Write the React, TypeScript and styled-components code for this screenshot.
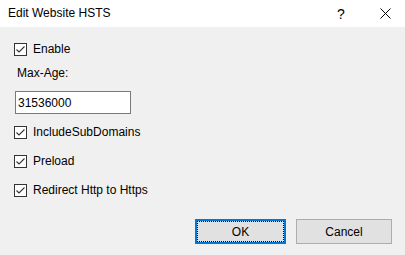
import React from "react";
import styled, { createGlobalStyle } from "styled-components";

const Global = createGlobalStyle`
  html, body { margin: 0; padding: 0; background: #f0f0f0; }
  body { font-family: "Liberation Sans", Arial, sans-serif; font-size: 12px; color: #000; }
`;

const Window = styled.div`
  width: 405px;
  height: 255px;
  display: flex;
  flex-direction: column;
  background: #f0f0f0;
  overflow: hidden;
`;

const TitleBar = styled.div`
  height: 27px;
  flex: none;
  background: #ffffff;
  display: flex;
  align-items: center;
  padding-left: 8px;
  box-sizing: border-box;
`;

const Title = styled.div`
  flex: 1;
  font-size: 12px;
  color: #000;
  padding-bottom: 2px;
`;

const TitleButton = styled.div<{ $w: number }>`
  width: ${(p) => p.$w}px;
  height: 27px;
  display: flex;
  align-items: center;
  justify-content: center;
  font-size: 14px;
  color: #000;
`;

const Content = styled.div`
  flex: 1;
  display: flex;
  flex-direction: column;
  padding: 15px 0 0 14px;
`;

const CheckRow = styled.label<{ $mt: number }>`
  display: flex;
  align-items: center;
  gap: 6px;
  height: 14px;
  margin-top: ${(p) => p.$mt}px;
`;

const Box = styled.span`
  width: 13px;
  height: 13px;
  box-sizing: border-box;
  border: 1px solid #333333;
  background: #ffffff;
  display: flex;
  align-items: center;
  justify-content: center;
  flex: none;
`;

const FieldLabel = styled.div`
  margin: 10px 0 0 3px;
  height: 14px;
  line-height: 14px;
`;

const Input = styled.div`
  margin: 11px 0 0 1px;
  width: 116px;
  height: 23px;
  box-sizing: border-box;
  border: 1px solid #7a7a7a;
  background: #fff;
  padding-left: 2px;
  display: flex;
  align-items: center;
`;

const Footer = styled.div`
  display: flex;
  gap: 10px;
  margin: auto 13px 11px auto;
`;

const Button = styled.div<{ $default?: boolean; $w: number }>`
  width: ${(p) => p.$w}px;
  height: 25px;
  box-sizing: border-box;
  background: #e1e1e1;
  border: ${(p) => (p.$default ? "2px solid #0078d7" : "1px solid #adadad")};
  display: flex;
  align-items: center;
  justify-content: center;
  position: relative;
`;

const FocusRing = styled.span`
  position: absolute;
  inset: 0;
  border: 1px dotted #000;
`;

const Check = () => (
  <svg width="11" height="11" viewBox="0 0 11 11">
    <path d="M1.5 5.5 L4 8 L9.5 2.5" fill="none" stroke="#333" strokeWidth="1.1" />
  </svg>
);

const CheckBox = ({ label, mt }: { label: string; mt: number }) => (
  <CheckRow $mt={mt}>
    <Box>
      <Check />
    </Box>
    <span>{label}</span>
  </CheckRow>
);

export default function App() {
  return (
    <>
      <Global />
      <Window>
        <TitleBar>
          <Title>Edit Website HSTS</Title>
          <TitleButton $w={48}>?</TitleButton>
          <TitleButton $w={40}>
            <svg width="11" height="11" viewBox="0 0 11 11">
              <path d="M0.5 0.5 L10.5 10.5 M10.5 0.5 L0.5 10.5" stroke="#000" strokeWidth="1" />
            </svg>
          </TitleButton>
        </TitleBar>
        <Content>
          <CheckBox label="Enable" mt={0} />
          <FieldLabel>Max-Age:</FieldLabel>
          <Input>31536000</Input>
          <CheckBox label="IncludeSubDomains" mt={11} />
          <CheckBox label="Preload" mt={15} />
          <CheckBox label="Redirect Http to Https" mt={15} />
          <Footer>
            <Button $default $w={91}>
              <FocusRing />
              OK
            </Button>
            <Button $w={96}>Cancel</Button>
          </Footer>
        </Content>
      </Window>
    </>
  );
}
